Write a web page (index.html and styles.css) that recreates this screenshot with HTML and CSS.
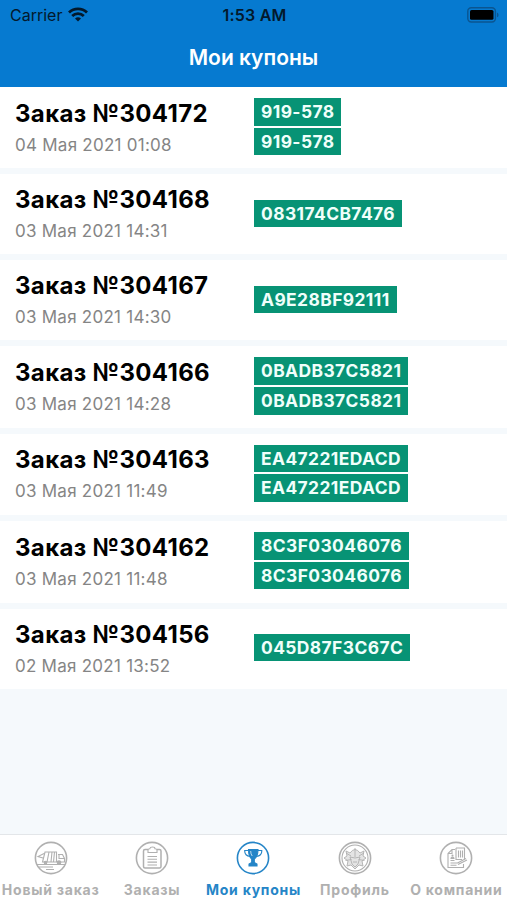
FILE: index.html
```html
<!DOCTYPE html>
<html lang="ru">
<head>
  <meta charset="utf-8">
  <meta name="viewport" content="width=device-width, initial-scale=1">
  <title>Мои купоны</title>
  <link rel="stylesheet" href="styles.css">
</head>
<body>
  <header>
    <div class="status">
      <div class="carrier">
        <span>Carrier</span>
        <svg width="20" height="15" viewBox="0 0 20 15" fill="none" stroke="#03192c" stroke-width="2.8">
          <path d="M1 5.4a13 13 0 0 1 18 0"/>
          <path d="M4.2 9a8.400 8.400 0 0 1 11.600 0"/>
          <path d="M10 14.600l-3-3a4.400 4.400 0 0 1 6 0z" fill="#03192c" stroke="none"/>
        </svg>
      </div>
      <div class="time">1:53 AM</div>
      <div class="battery">
        <svg width="33" height="16" viewBox="0 0 33 16">
          <rect x="1.800" y=".8" width="27.600" height="14.200" rx="3.5" fill="none" stroke="#0b5590" stroke-width="1.4"/>
          <rect x="4" y="3" width="23.500" height="9.800" rx="1.6" fill="#000"/>
          <path d="M31 5.600q1.600.6 1.600 2.300t-1.600 2.300z" fill="#0b5590"/>
        </svg>
      </div>
    </div>
    <h1>Мои купоны</h1>
  </header>
  <main>
    <div class="order">
      <div class="info">
        <h2>Заказ №304172</h2>
        <p>04 Мая 2021 01:08</p>
      </div>
      <div class="coupons">
        <span>919-578</span>
        <span>919-578</span>
      </div>
    </div>
    <div class="order">
      <div class="info">
        <h2>Заказ №304168</h2>
        <p>03 Мая 2021 14:31</p>
      </div>
      <div class="coupons">
        <span>083174CB7476</span>
      </div>
    </div>
    <div class="order">
      <div class="info">
        <h2>Заказ №304167</h2>
        <p>03 Мая 2021 14:30</p>
      </div>
      <div class="coupons">
        <span>A9E28BF92111</span>
      </div>
    </div>
    <div class="order">
      <div class="info">
        <h2>Заказ №304166</h2>
        <p>03 Мая 2021 14:28</p>
      </div>
      <div class="coupons">
        <span>0BADB37C5821</span>
        <span>0BADB37C5821</span>
      </div>
    </div>
    <div class="order">
      <div class="info">
        <h2>Заказ №304163</h2>
        <p>03 Мая 2021 11:49</p>
      </div>
      <div class="coupons">
        <span>EA47221EDACD</span>
        <span>EA47221EDACD</span>
      </div>
    </div>
    <div class="order">
      <div class="info">
        <h2>Заказ №304162</h2>
        <p>03 Мая 2021 11:48</p>
      </div>
      <div class="coupons">
        <span>8C3F03046076</span>
        <span>8C3F03046076</span>
      </div>
    </div>
    <div class="order">
      <div class="info">
        <h2>Заказ №304156</h2>
        <p>02 Мая 2021 13:52</p>
      </div>
      <div class="coupons">
        <span>045D87F3C67C</span>
      </div>
    </div>
  </main>
  <nav>
    <a class="tab">
      <svg viewBox="0 0 34 34">
        <circle class="ring" cx="17" cy="17" r="15.6"/>
        <path d="M11 11h4l-2 10H8.500zM15 11h7.500v10H13M18 11l-1 10M20.500 11l-1 10M24 13.500h4.500l2 4V21h-8v-7.500M25 14v3.500h5M10 12.500l-6 3 5 1.500M3 23.500h28M5 26h14M12 28.500h8"/>
        <circle class="solid" cx="11.500" cy="21.500" r="1.300"/>
        <circle class="solid" cx="25" cy="21.500" r="1.800"/>
      </svg>
      <span>Новый заказ</span>
    </a>
    <a class="tab">
      <svg viewBox="0 0 34 34">
        <circle class="ring" cx="17" cy="17" r="15.6"/>
        <path d="M13 8.500H10Q8.500 8.500 8.500 10v15.500q0 1.500 1.500 1.500h14.500q1.500 0 1.500-1.500V10q0-1.500-1.500-1.500H22" stroke-width="1.5"/>
        <path d="M13 11.500V9q0-1.200 1.700-1.200Q15 6 17.500 6t2.500 1.800q2 0 2 1.200v2.500zM12.500 15.500h9.500M12.500 18.300h9.500M12.500 21.100h9.500M12.500 24h9.500"/>
      </svg>
      <span>Заказы</span>
    </a>
    <a class="tab active">
      <svg viewBox="0 0 34 34">
        <circle class="ring" cx="17" cy="17" r="15.6"/>
        <path class="solid" d="M12.500 8.500h9.500q0 7-3.700 9.500v3.500l2.700 1.500v2h-8v-2l2.700-1.500V18q-3.200-2.500-3.200-9.500z"/>
        <path d="M12.500 9.500H8.700q-.2 5.500 5.500 6M22 9.500h3.800q.2 5.500-5.500 6"/>
        <path d="M14.700 10q0 3 1.500 5" stroke="#fff" stroke-width=".7"/>
      </svg>
      <span>Мои купоны</span>
    </a>
    <a class="tab">
      <svg viewBox="0 0 34 34">
        <circle class="ring" cx="17" cy="17" r="15.6"/>
        <circle cx="17" cy="17" r="13"/>
        <g stroke-width=".9">
          <path class="tint" d="M12 12q5-7 10 0l4-2-1 5 3 2-4 3 1 5-4-1-4 4-4-4-4 1 1-5-4-3 3-2-1-5z"/>
          <path d="M12 16l5 1 5-1-2 7-3 3-3-3zM17 7v9M8 12l5 3M26 12l-5 3M7.500 19.500l6-1M26.500 19.500l-6-1M15 21h4"/>
        </g>
      </svg>
      <span>Профиль</span>
    </a>
    <a class="tab">
      <svg viewBox="0 0 34 34">
        <circle class="ring" cx="17" cy="17" r="15.6"/>
        <path d="M16 8.500h-3l-4 4V26.500h15.500V23M9 12.500h4v-4M17 7h8.500v12M17 7v11.500h6M19.500 9.500v7M21.500 9.500v7M23.500 9.500v7M11.500 19.500h4M11.500 22h7M11.500 24.300h6M19 23.500l9-4.500M18.500 22l8.500-4.500"/>
        <path class="solid" d="M12 17.500q0-1.500 1.500-1.500t1.500 1.500z"/>
        <circle class="solid" cx="13.500" cy="14.500" r=".5"/>
      </svg>
      <span>О компании</span>
    </a>
  </nav>
</body>
</html>
```
FILE: styles.css
```css
body {
  margin: 0;
  height: 900px;
  display: flex;
  flex-direction: column;
  overflow: hidden;
  background: #f5f9fc;
  font-family: Inter, "Liberation Sans", sans-serif;
}
header {
  height: 87px;
  background: #067ad0;
}
.status {
  display: grid;
  grid-template-columns: 1fr auto 1fr;
  align-items: center;
  height: 29px;
  padding: 0 8px 0 10px;
  color: #03192c;
  font-size: 16px;
}
.carrier {
  display: flex;
  align-items: center;
  gap: 6px;
}
.time {
  font-weight: 600;
  letter-spacing: .2px;
}
.battery {
  display: flex;
  justify-content: flex-end;
}
h1 {
  margin: 0;
  color: #fff;
  font-size: 21px;
  font-weight: 600;
  line-height: 57px;
  text-align: center;
}
main {
  flex: 1;
  display: flex;
  flex-direction: column;
  gap: 6px;
}
.order {
  display: flex;
  align-items: center;
  box-sizing: border-box;
  min-height: 79.5px;
  padding: 11px 15px;
  background: #fff;
}
.info {
  width: 239px;
}
h2 {
  margin: 0;
  font-size: 24px;
  font-weight: 700;
  line-height: 30px;
  letter-spacing: .35px;
  white-space: nowrap;
}
p {
  margin: 4px 0 0;
  color: #858585;
  font-size: 17px;
  line-height: 24px;
  letter-spacing: .25px;
}
.coupons {
  display: flex;
  flex-direction: column;
  align-items: flex-start;
}
.coupons span {
  height: 27.5px;
  margin-bottom: 2.2px;
  padding: 0 7px;
  background: #079375;
  color: #f0fffb;
  font-size: 17.4px;
  font-weight: 700;
  line-height: 27.5px;
  letter-spacing: .42px;
}
nav {
  display: grid;
  grid-template-columns: repeat(5, 1fr);
  height: 65px;
  border-top: 1px solid #e3e6e9;
  background: #fff;
}
.tab {
  display: flex;
  flex-direction: column;
  align-items: center;
  color: #b0b0b0;
  font-size: 14px;
  font-weight: 700;
  white-space: nowrap;
}
.tab svg {
  width: 34px;
  height: 34px;
  margin-top: 6px;
  fill: none;
  stroke: currentColor;
  stroke-width: 1.1;
}
.tab .ring {
  stroke-width: 1.6;
}
.tab .solid {
  fill: currentColor;
}
.tab .tint {
  fill: #e4e4e4;
}
.tab span {
  margin-top: 6px;
  line-height: 18px;
  letter-spacing: .75px;
}
.active {
  color: #2585c7;
}
```
